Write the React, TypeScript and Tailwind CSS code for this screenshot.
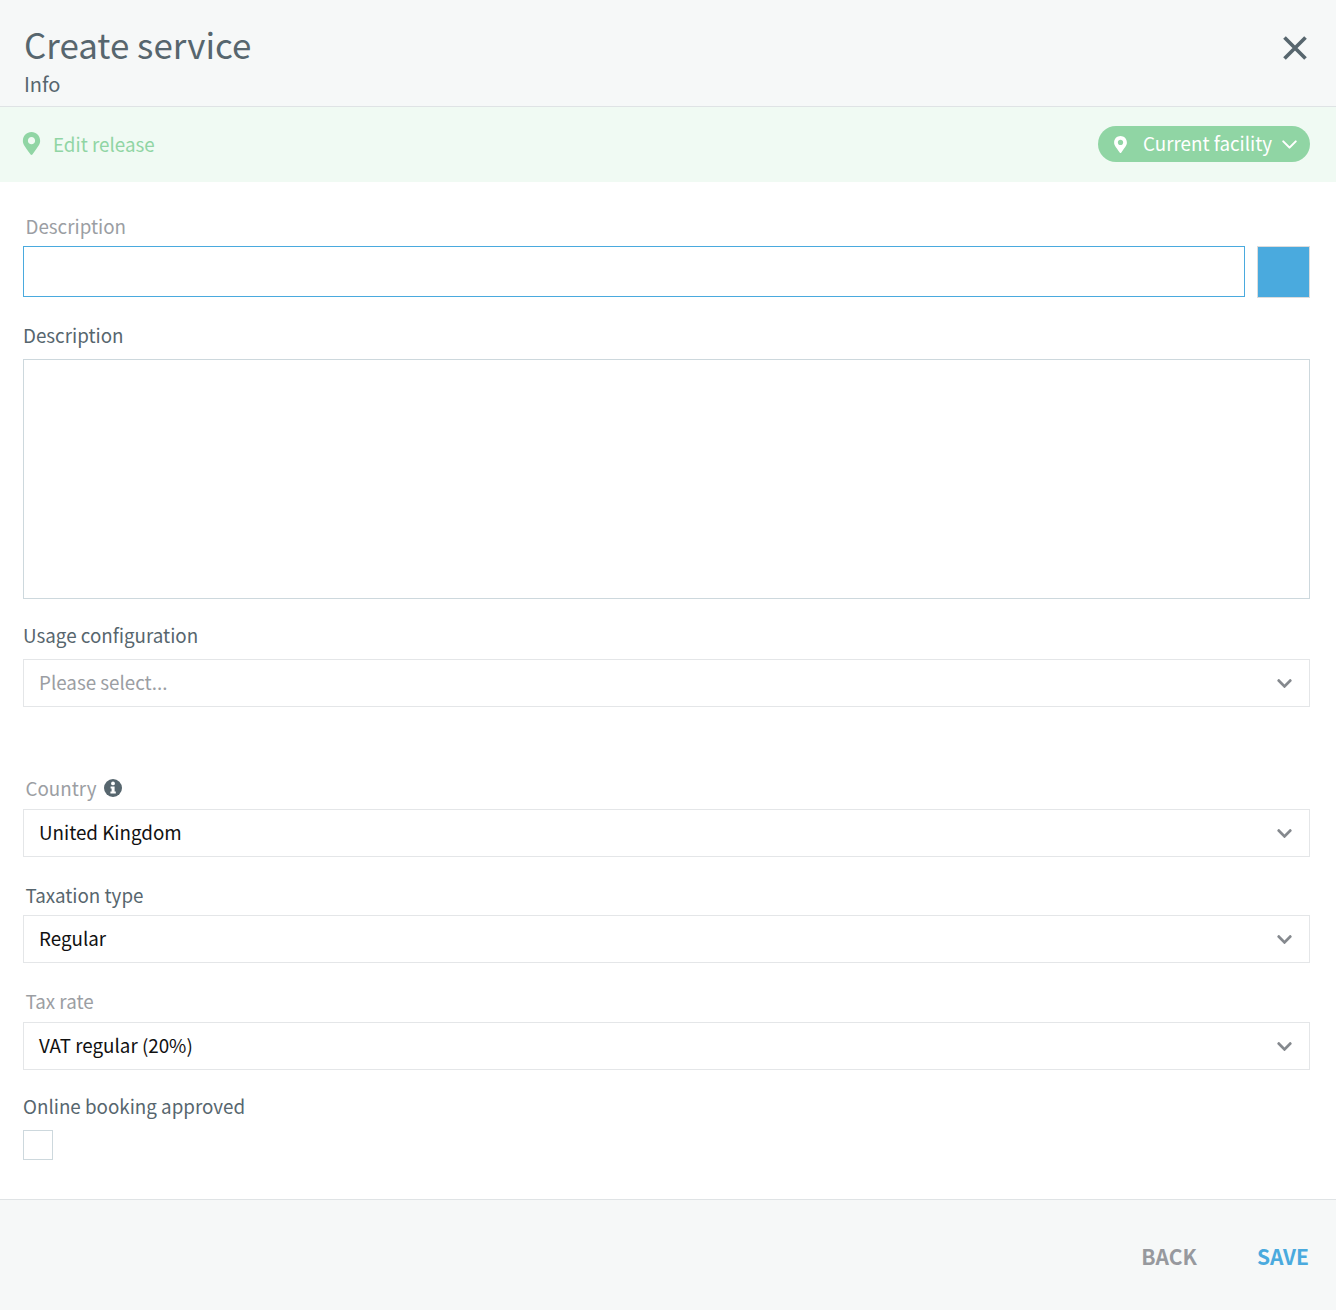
import { ChevronDown } from "lucide-react";
import { FaChevronDown, FaMapMarkerAlt } from "react-icons/fa";

const font = "font-['Noto_Sans_CJK_JP','Source_Sans_Pro','Noto_Sans',sans-serif]";

function Select({ value, placeholder }: { value?: string; placeholder?: string }) {
  return (
    <div className="flex h-[48px] items-center justify-between border border-[#e4e6e8] pl-[15px] pr-[16px]">
      {value ? (
        <span className="-mt-[2px] text-[18.8px] leading-[24px] text-[#111111]">{value}</span>
      ) : (
        <span className="-mt-[2px] text-[18.8px] leading-[24px] text-[#9b9ea3]">{placeholder}</span>
      )}
      <FaChevronDown className="text-[#85898e]" size={17} />
    </div>
  );
}

export default function App() {
  return (
    <div className={`${font} flex h-[1310px] w-full flex-col bg-white`}>
      <div className="flex h-[107px] shrink-0 items-start justify-between border-b border-[#dfe3e5] bg-[#f6f8f8] pl-[24px] pr-[29px]">
        <div>
          <h1 className="mt-[22px] text-[34.9px] leading-[44px] font-normal text-[#57666e]">Create service</h1>
          <p className="mt-[4px] text-[20px] leading-[28px] text-[#57666e]">Info</p>
        </div>
        <svg className="mt-[36px]" width="24" height="24" viewBox="0 0 24 24" fill="none" stroke="#57666e" strokeWidth="3.7">
          <path d="M1.5 1.5L22.5 22.5M22.5 1.5L1.5 22.5" />
        </svg>
      </div>

      <div className="flex h-[75px] shrink-0 items-center justify-between bg-[#f0faf3] pl-[23px] pr-[26px]">
        <div className="flex items-center">
          <FaMapMarkerAlt className="-ml-[3px] -mt-[2px] text-[#90d5a4]" size={23} />
          <span className="ml-[10px] -mt-[2px] text-[18.8px] leading-[24px] text-[#90d5a4]">Edit release</span>
        </div>
        <div className="-mt-[1px] flex h-[36px] w-[212px] items-center rounded-full bg-[#90d5a4] pl-[14px] text-white">
          <FaMapMarkerAlt size={17} />
          <span className="ml-[14px] -mt-[2px] text-[18.8px] leading-[24px]">Current facility</span>
          <ChevronDown className="ml-[5px]" size={25} strokeWidth={2} />
        </div>
      </div>

      <div className="flex-1 px-[23px] pr-[26px] pt-[32px]">
        <label className="block pl-[2.5px] text-[18.8px] leading-[24px] text-[#9b9ea3]">Description</label>
        <div className="mt-[8px] flex items-start gap-[12px]">
          <div className="h-[51px] flex-1 border border-[#4aaade]" />
          <div className="h-[52px] w-[53px] border border-[#dcdcdc] bg-[#4aaade]" />
        </div>

        <label className="mt-[25px] block text-[18.8px] leading-[24px] text-[#57666e]">Description</label>
        <div className="mt-[12px] h-[240px] border border-[#cdd8dd]" />

        <label className="mt-[24px] block text-[18.8px] leading-[24px] text-[#57666e]">Usage configuration</label>
        <div className="mt-[12px]">
          <Select placeholder="Please select..." />
        </div>

        <div className="mt-[69px] flex h-[24px] items-center pl-[2.5px]">
          <span className="text-[18.8px] leading-[24px] text-[#9b9ea3]">Country</span>
          <svg className="ml-[8px]" width="18" height="18" viewBox="0 0 18 18">
            <circle cx="9" cy="9" r="9" fill="#57666e" />
            <circle cx="9" cy="4.4" r="1.9" fill="#fff" />
            <path d="M6.6 7.6H10.6V12.4H11.8V14.4H6.4V12.4H7.6V9.6H6.6Z" fill="#fff" />
          </svg>
        </div>
        <div className="mt-[9px]">
          <Select value="United Kingdom" />
        </div>

        <label className="mt-[26px] block pl-[2.5px] text-[18.8px] leading-[24px] text-[#57666e]">Taxation type</label>
        <div className="mt-[8px]">
          <Select value="Regular" />
        </div>

        <label className="mt-[26px] block pl-[2.5px] text-[18.8px] leading-[24px] text-[#9b9ea3]">Tax rate</label>
        <div className="mt-[9px]">
          <Select value="VAT regular (20%)" />
        </div>

        <label className="mt-[24px] block text-[18.8px] leading-[24px] text-[#57666e]">Online booking approved</label>
        <div className="mt-[12px] h-[30px] w-[30px] border border-[#cdd8dd]" />
      </div>

      <div className="flex h-[111px] shrink-0 items-center justify-end gap-[60px] border-t border-[#dfe3e5] bg-[#f6f8f8] pr-[27px] pt-[2px]">
        <button className="text-[21px] leading-[28px] font-semibold text-[#97999e]">BACK</button>
        <button className="text-[21px] leading-[28px] font-semibold text-[#4aaade]">SAVE</button>
      </div>
    </div>
  );
}
